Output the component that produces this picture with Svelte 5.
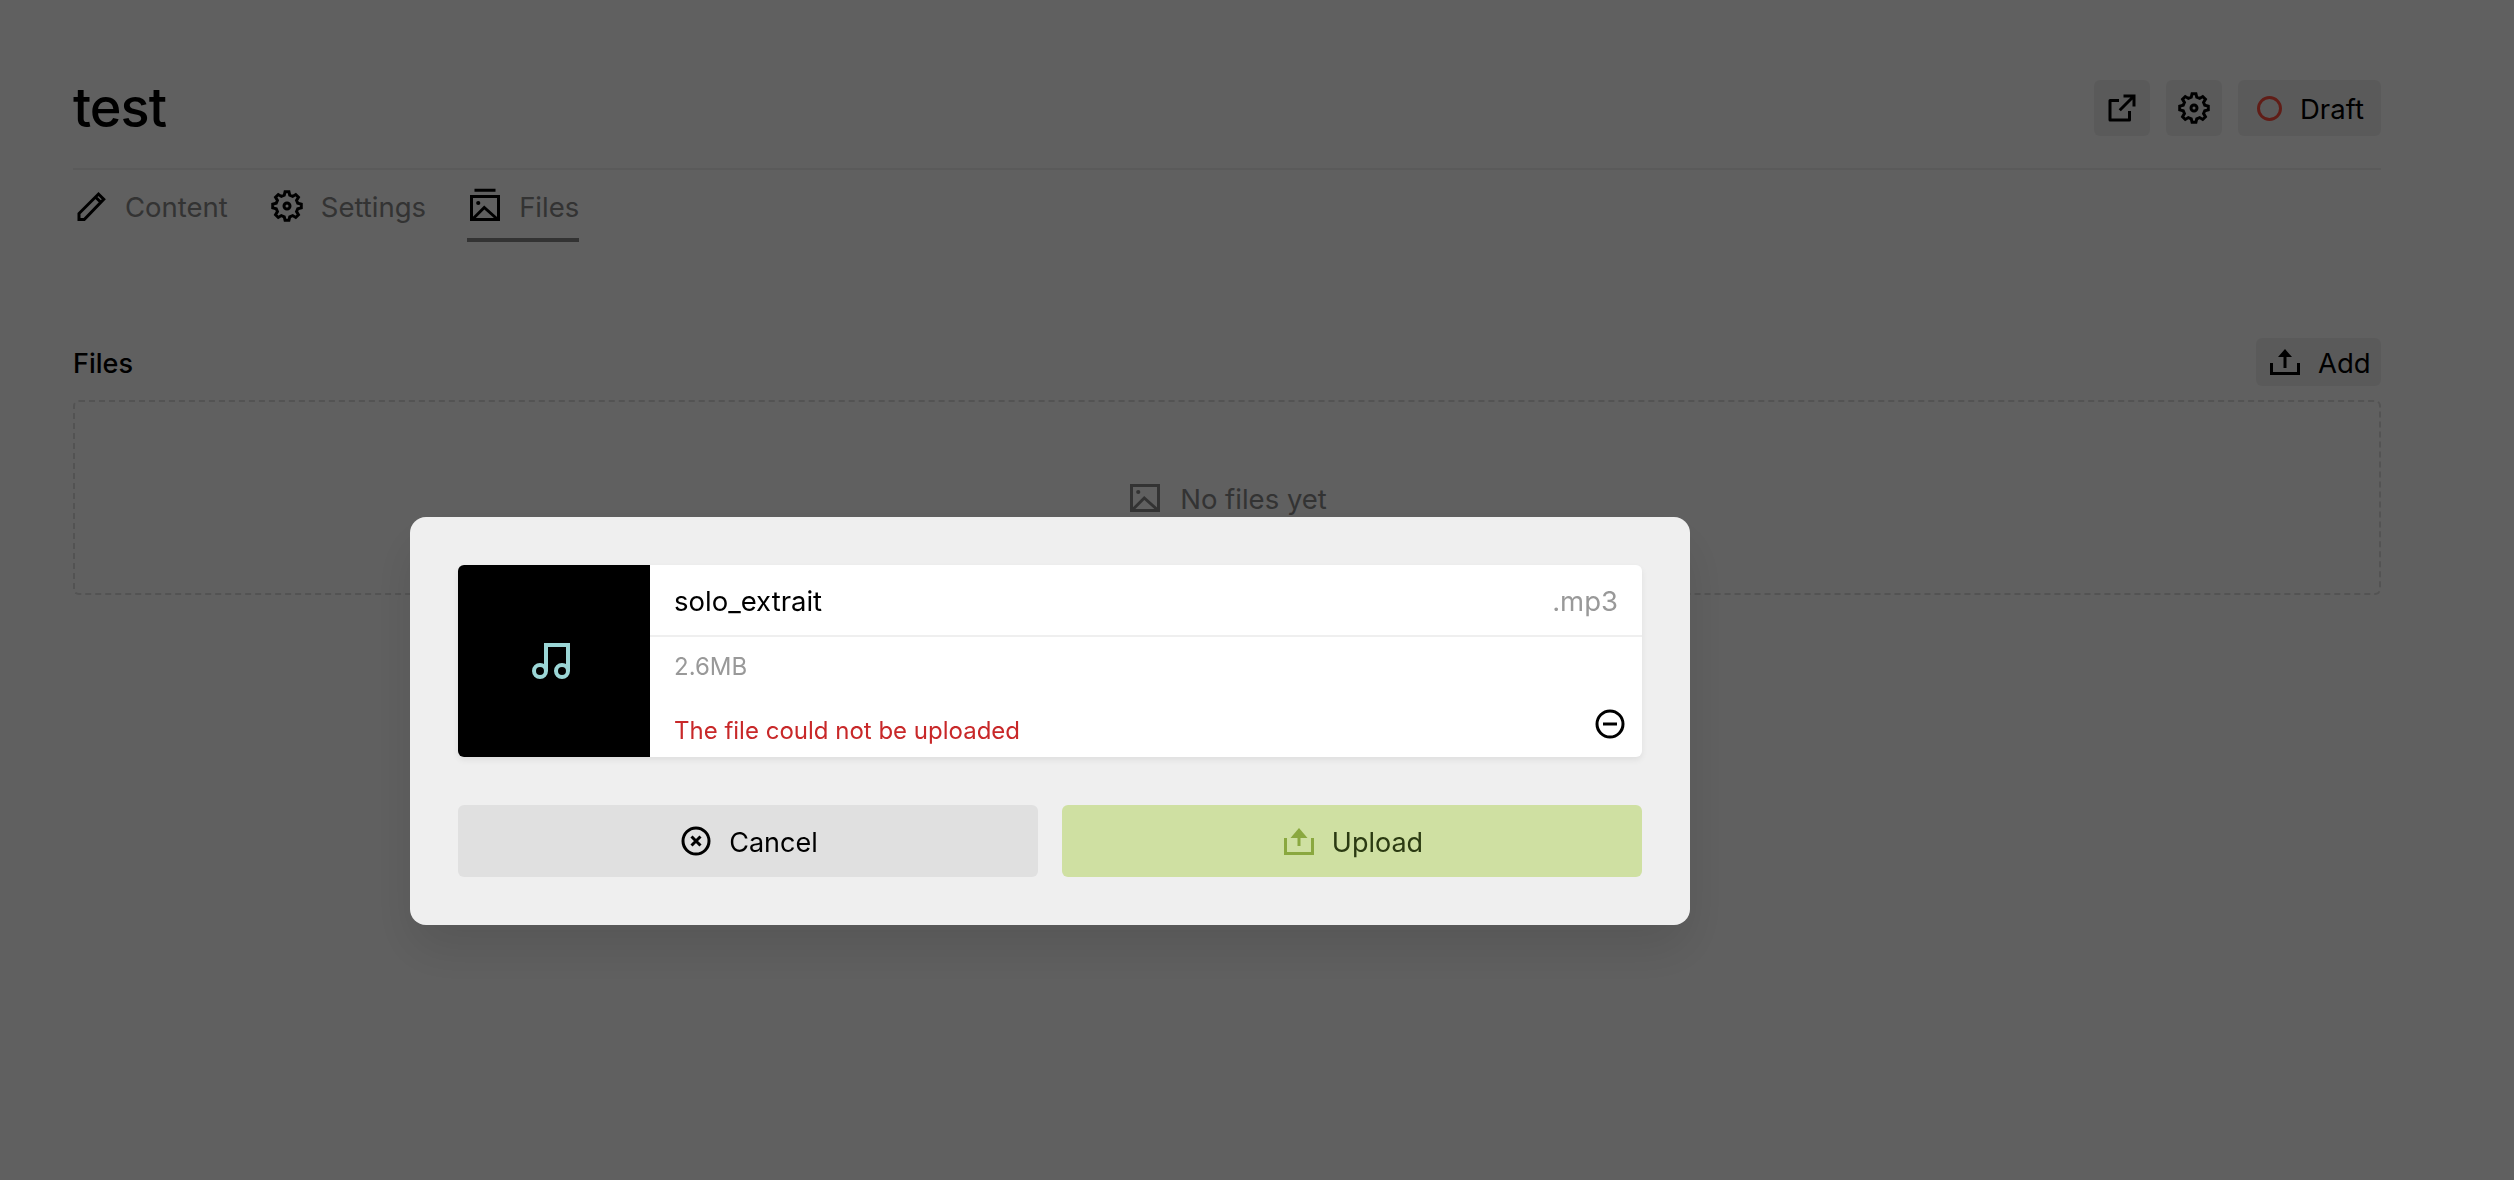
<script>
  // gear outline for the cog icons, on a 24 unit grid
  function gear(teeth = 8, outer = 9.6, inner = 7.4) {
    let d = "";
    const step = (Math.PI * 2) / teeth;
    for (let i = 0; i < teeth; i++) {
      const a = i * step - Math.PI / 2;
      const pts = [
        [inner, a - step * 0.32],
        [outer, a - step * 0.17],
        [outer, a + step * 0.17],
        [inner, a + step * 0.32],
      ];
      for (const [r, t] of pts) {
        d += (d ? "L" : "M") + (12 + r * Math.cos(t)).toFixed(2) + " " + (12 + r * Math.sin(t)).toFixed(2);
      }
    }
    return d + "Z";
  }
  const cog = gear();
</script>

<div class="page">
  <header class="head">
    <h1>test</h1>
    <div class="actions">
      <button class="btn square" aria-label="Open">
        <svg class="ico" viewBox="0 0 24 24"><path d="M10 6v2H5v11h11v-5h2v6a1 1 0 0 1-1 1H4a1 1 0 0 1-1-1V7a1 1 0 0 1 1-1h6zm11-3v8h-2V6.413l-7.793 7.794-1.414-1.414L17.585 5H13V3h8z" /></svg>
      </button>
      <button class="btn square" aria-label="Settings">
        <svg class="ico line" viewBox="0 0 24 24"><path d={cog} /><circle cx="12" cy="12" r="2" /></svg>
      </button>
      <button class="btn draft">
        <span class="status"></span>
        <span class="label">Draft</span>
      </button>
    </div>
  </header>

  <nav class="tabs">
    <a class="tab">
      <svg class="ico line" viewBox="0 0 24 24"><path d="M4 21v-4L17 4l3.5 3.5L7.5 21zM15 6l3.5 3.5" /></svg>
      <span class="label">Content</span>
    </a>
    <a class="tab">
      <svg class="ico line" viewBox="0 0 24 24"><path d={cog} /><circle cx="12" cy="12" r="2" /></svg>
      <span class="label">Settings</span>
    </a>
    <a class="tab current">
      <svg class="ico line" viewBox="0 0 24 24">
        <path d="M5 1.5h14M3 5.7h18V21H3zM3.5 21l8-8 9 8" />
        <circle class="dot" cx="7.5" cy="10" r="1.4" />
      </svg>
      <span class="label">Files</span>
    </a>
  </nav>

  <section class="files">
    <div class="files-head">
      <h2>Files</h2>
      <button class="btn add">
        <svg class="up-small" viewBox="0 0 30 30">
          <path class="tray-black" d="M1.5 16v10.5h27V16M15 10v11" />
          <path d="M15 2l7 8H8z" />
        </svg>
        <span class="label">Add</span>
      </button>
    </div>
    <div class="empty">
      <svg class="ico line" viewBox="0 0 24 24">
        <path d="M3 3.7h18v16.6H3zM3.5 20l8-8 9 8" />
        <circle class="dot" cx="7.5" cy="8" r="1.4" />
      </svg>
      <span class="label">No files yet</span>
    </div>
  </section>
</div>

<div class="overlay">
  <div class="dialog">
    <div class="card">
      <div class="thumb">
        <svg class="note" viewBox="0 0 44 38">
          <path d="M14 29V3h22v26" />
          <circle cx="8" cy="29" r="6" />
          <circle cx="30" cy="29" r="6" />
        </svg>
      </div>
      <div class="info">
        <div class="name">
          <span>solo_extrait</span>
          <span class="ext">.mp3</span>
        </div>
        <div class="meta">
          <div class="size">2.6MB</div>
          <div class="error">The file could not be uploaded</div>
          <svg class="remove" viewBox="0 0 30 30">
            <circle cx="15" cy="15" r="13" />
            <path d="M8 15h14" />
          </svg>
        </div>
      </div>
    </div>
    <div class="buttons">
      <button class="dbtn cancel">
        <svg class="dico" viewBox="0 0 30 30">
          <circle cx="15" cy="15" r="13" />
          <path d="M10.5 10.5l9 9M19.5 10.5l-9 9" />
        </svg>
        <span class="label">Cancel</span>
      </button>
      <button class="dbtn upload">
        <svg class="up" viewBox="0 0 30 30">
          <path class="tray" d="M1.5 12v15.5h27V12M15 12v8" />
          <path class="head-up" d="M15 2l8.5 10h-17z" />
        </svg>
        <span class="label">Upload</span>
      </button>
    </div>
  </div>
</div>

<style>
  :global(body) {
    background: #efefef;
    font-family: Inter, "Noto Sans", sans-serif;
    color: #000;
  }

  .page {
    height: 1180px;
    box-sizing: border-box;
    padding: 80px 133px 0 73px;
    overflow: hidden;
  }

  .label {
    padding-top: 2px;
  }

  .head {
    display: flex;
    justify-content: space-between;
    align-items: center;
    height: 56px;
    padding-bottom: 32px;
    border-bottom: 2px solid #e2e2e2;
  }

  h1 {
    margin: 0 0 2px;
    font-size: 54px;
    font-weight: 500;
    letter-spacing: -1px;
  }

  .actions {
    display: flex;
    gap: 16px;
  }

  .btn {
    display: flex;
    align-items: center;
    border: 0;
    border-radius: 6px;
    background: #e2e2e2;
    font: inherit;
    font-size: 27.5px;
    color: #000;
    padding: 0;
  }

  .square {
    width: 56px;
    height: 56px;
    justify-content: center;
  }

  .draft {
    width: 143px;
    height: 56px;
    padding-left: 19px;
    box-sizing: border-box;
    gap: 18px;
  }

  .status {
    width: 25px;
    height: 25px;
    box-sizing: border-box;
    border: 3px solid #f04a3a;
    border-radius: 50%;
  }

  .ico {
    width: 36px;
    height: 36px;
    fill: #000;
    flex: none;
  }

  .ico.line {
    fill: none;
    stroke: #000;
    stroke-width: 2;
  }

  .ico .dot {
    fill: #000;
    stroke: none;
  }

  .tabs {
    display: flex;
    gap: 41px;
    height: 72px;
  }

  .tab {
    display: flex;
    align-items: center;
    gap: 16px;
    height: 72px;
    font-size: 27.5px;
    color: #808080;
  }

  .tab.current {
    box-shadow: inset 0 -4px #808080;
  }

  .files {
    margin-top: 96px;
  }

  .files-head {
    display: flex;
    justify-content: space-between;
    align-items: center;
    height: 48px;
    margin-bottom: 14px;
  }

  h2 {
    margin: 0;
    padding-top: 2px;
    font-size: 27px;
    font-weight: 500;
  }

  .add {
    width: 125px;
    height: 48px;
    padding-left: 14px;
    box-sizing: border-box;
    gap: 18px;
  }

  .up-small {
    width: 30px;
    height: 30px;
    flex: none;
  }

  .tray-black {
    fill: none;
    stroke: #000;
    stroke-width: 3;
  }

  .empty {
    display: flex;
    align-items: center;
    justify-content: center;
    gap: 17px;
    height: 195px;
    box-sizing: border-box;
    border: 2px dashed #cfcfcf;
    border-radius: 6px;
    font-size: 27.5px;
    color: #808080;
  }

  .empty .ico {
    stroke: #808080;
  }

  .empty .ico .dot {
    fill: #808080;
  }

  .overlay {
    position: fixed;
    inset: 0;
    background: rgba(0, 0, 0, 0.6);
    display: flex;
    justify-content: center;
    padding: 517px 414px 0 0;
    box-sizing: border-box;
  }

  .dialog {
    width: 1280px;
    height: 408px;
    box-sizing: border-box;
    padding: 48px;
    background: #efefef;
    border-radius: 16px;
    box-shadow: 0 25px 50px rgba(0, 0, 0, 0.1);
    display: flex;
    flex-direction: column;
    gap: 48px;
  }

  .card {
    display: flex;
    height: 192px;
    background: #fff;
    border-radius: 6px;
    overflow: hidden;
    box-shadow: 0 3px 6px rgba(0, 0, 0, 0.07);
  }

  .thumb {
    width: 192px;
    background: #000;
    display: flex;
    align-items: center;
    justify-content: center;
    flex: none;
  }

  .note {
    width: 44px;
    height: 38px;
    fill: none;
    stroke: #9bd6d6;
    stroke-width: 4;
  }

  .info {
    flex: 1;
    display: flex;
    flex-direction: column;
  }

  .name {
    display: flex;
    justify-content: space-between;
    align-items: center;
    height: 68px;
    padding: 2px 24px 0;
    border-bottom: 2px solid #efefef;
    font-size: 27.5px;
  }

  .ext {
    color: #999;
  }

  .meta {
    position: relative;
    flex: 1;
    padding: 0 24px;
    font-size: 24px;
  }

  .size {
    margin-top: 15px;
    color: #999;
  }

  .error {
    margin-top: 35px;
    color: #c82829;
  }

  .remove {
    position: absolute;
    right: 17px;
    bottom: 18px;
    width: 30px;
    height: 30px;
    fill: none;
    stroke: #000;
    stroke-width: 3;
  }

  .buttons {
    display: grid;
    grid-template-columns: 1fr 1fr;
    gap: 24px;
  }

  .dbtn {
    display: flex;
    align-items: center;
    justify-content: center;
    gap: 18px;
    height: 72px;
    padding: 0 0 0 3px;
    border: 0;
    border-radius: 6px;
    font: inherit;
    font-size: 27px;
  }

  .cancel {
    background: #e0e0e0;
    color: #000;
  }

  .upload {
    background: #cfe0a2;
    color: #2b3a12;
  }

  .dico {
    width: 30px;
    height: 30px;
    fill: none;
    stroke: #000;
    stroke-width: 3;
  }

  .up {
    width: 30px;
    height: 30px;
  }

  .tray {
    fill: none;
    stroke: #8aa83f;
    stroke-width: 3;
  }

  .head-up {
    fill: #8aa83f;
  }
</style>
